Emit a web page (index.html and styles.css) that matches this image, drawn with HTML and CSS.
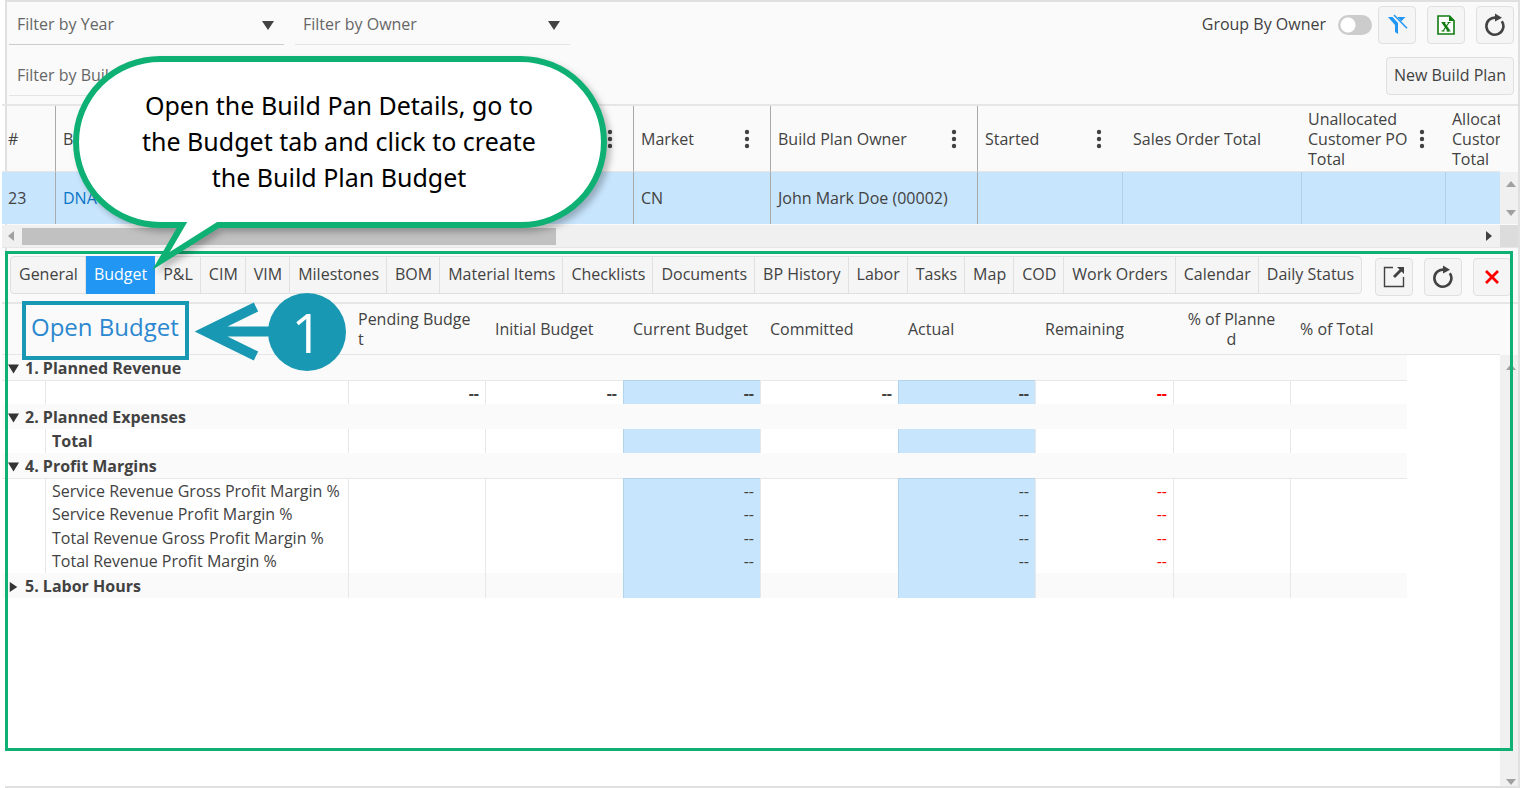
FILE: index.html
```html
<!DOCTYPE html>
<html lang="en">
<head>
  <meta charset="utf-8">
  <title>Build Plans</title>
  <link rel="stylesheet" href="styles.css">
</head>
<body>
  <svg class="sprite" aria-hidden="true">
    <symbol id="dots" viewBox="0 0 6 20">
      <circle cx="3" cy="3" r="2.2"/><circle cx="3" cy="10" r="2.2"/><circle cx="3" cy="17" r="2.2"/>
    </symbol>
    <symbol id="refresh" viewBox="0 0 24 24">
      <path d="M18.800 8.200A8.500 8.500 0 1 1 13.500 4.800" fill="none" stroke="currentColor" stroke-width="2.600"/>
      <path d="M12 .5l7 4.200-7 3.800z" fill="currentColor"/>
    </symbol>
  </svg>

  <main class="page">
    <header class="toolbar">
      <div class="filters">
        <div class="field field-active">
          <select aria-label="Filter by Year"><option>Filter by Year</option></select>
          <svg class="caret" viewBox="0 0 12 9"><path d="M0 0h12L6 9z"/></svg>
        </div>
        <div class="field">
          <select aria-label="Filter by Owner"><option>Filter by Owner</option></select>
          <svg class="caret" viewBox="0 0 12 9"><path d="M0 0h12L6 9z"/></svg>
        </div>
        <div class="field">
          <input type="text" aria-label="Filter by Build Plan" placeholder="Filter by Build Plan">
        </div>
      </div>
      <div class="actions">
        <div class="actions-row">
          <label class="switch-label" for="groupByOwner">Group By Owner</label>
          <input class="switch" type="checkbox" id="groupByOwner">
          <button class="btn btn-icon btn-filter" type="button" aria-label="Clear filters">
            <svg width="22" height="22" viewBox="0 0 22 22">
              <path d="M2 3h4.500l5.500 6v11l-3-2v-7z" fill="#2196f3"/>
              <path d="M11.500 3H19.500l-4.200 4.300z" fill="#2196f3"/>
              <path d="M8 1L21 14.200" stroke="#2196f3" stroke-width="1.500"/>
            </svg>
          </button>
          <button class="btn btn-icon" type="button" aria-label="Export to Excel">
            <svg width="18" height="20" viewBox="0 0 18 20">
              <path d="M1 1h11.500l4.500 4.500V19H1z" fill="#fff" stroke="#107c10" stroke-width="1.600"/>
              <path d="M12 1v5h5z" fill="#107c10"/>
              <path d="M6 7.500l6 8.500" stroke="#107c10" stroke-width="2.600"/>
              <path d="M12 7.500l-6 8.500" stroke="#107c10" stroke-width="1.200"/>
              <path d="M4.500 7.500h4M10.500 7.500h3M4.500 16h3M9.500 16h4" stroke="#107c10"/>
            </svg>
          </button>
          <button class="btn btn-icon" type="button" aria-label="Refresh">
            <svg width="24" height="24"><use href="#refresh"/></svg>
          </button>
        </div>
        <button class="btn btn-text" type="button">New Build Plan</button>
      </div>
    </header>

    <section class="plans">
      <table class="plans-table">
        <colgroup>
          <col class="c-num"><col class="c-name"><col class="c-market"><col class="c-owner">
          <col class="c-started"><col class="c-sales"><col class="c-unalloc"><col>
        </colgroup>
        <thead>
          <tr>
            <th>#</th>
            <th><div class="head">Build Plan<svg class="dots"><use href="#dots"/></svg></div></th>
            <th><div class="head">Market<svg class="dots"><use href="#dots"/></svg></div></th>
            <th><div class="head">Build Plan Owner<svg class="dots"><use href="#dots"/></svg></div></th>
            <th><div class="head">Started<svg class="dots"><use href="#dots"/></svg></div></th>
            <th class="plain wide">Sales Order Total</th>
            <th class="plain"><div class="head"><span>Unallocated<br>Customer PO<br>Total</span><svg class="dots"><use href="#dots"/></svg></div></th>
            <th class="plain">Allocated<br>Customer<br>Total</th>
          </tr>
        </thead>
        <tbody>
          <tr>
            <td>23</td>
            <td><a href="#">DNA-0023</a></td>
            <td>CN</td>
            <td>John Mark Doe (00002)</td>
            <td></td>
            <td class="soft"></td>
            <td class="soft"></td>
            <td class="soft"></td>
          </tr>
        </tbody>
      </table>
      <div class="vscroll plans-vscroll">
        <svg class="arrow" viewBox="0 0 10 6"><path d="M0 6h10L5 0z"/></svg>
        <svg class="arrow" viewBox="0 0 10 6"><path d="M0 0h10L5 6z"/></svg>
      </div>
      <div class="hscroll">
        <svg class="side-arrow" viewBox="0 0 6 10"><path d="M6 0v10L0 5z"/></svg>
        <div class="thumb"></div>
        <svg class="side-arrow side-arrow-on" viewBox="0 0 6 10"><path d="M0 0v10l6-5z"/></svg>
      </div>
      <div class="corner"></div>
    </section>

    <section class="details">
      <div class="details-bar">
        <nav class="tabs">
          <button type="button">General</button>
          <button type="button" class="active">Budget</button>
          <button type="button">P&amp;L</button>
          <button type="button">CIM</button>
          <button type="button">VIM</button>
          <button type="button">Milestones</button>
          <button type="button">BOM</button>
          <button type="button">Material Items</button>
          <button type="button">Checklists</button>
          <button type="button">Documents</button>
          <button type="button">BP History</button>
          <button type="button">Labor</button>
          <button type="button">Tasks</button>
          <button type="button">Map</button>
          <button type="button">COD</button>
          <button type="button">Work Orders</button>
          <button type="button">Calendar</button>
          <button type="button">Daily Status</button>
        </nav>
        <div class="details-actions">
          <button class="btn btn-icon" type="button" aria-label="Open in new window">
            <svg width="22" height="22" viewBox="0 0 22 22" fill="none" stroke="#424242">
              <path d="M10 1.500H1.500v19H20.500V11" stroke-width="1.400"/>
              <path d="M11 11L18 4" stroke-width="2.800"/>
              <path d="M14 1H21v7z" fill="#424242" stroke="none"/>
            </svg>
          </button>
          <button class="btn btn-icon" type="button" aria-label="Refresh details">
            <svg width="24" height="24"><use href="#refresh"/></svg>
          </button>
          <button class="btn btn-icon" type="button" aria-label="Close details">
            <svg width="14" height="14" viewBox="0 0 14 14"><path d="M1 1l12 12M13 1L1 13" stroke="#f00" stroke-width="2.800"/></svg>
          </button>
        </div>
      </div>

      <div class="budget">
        <table class="budget-table">
          <colgroup>
            <col class="b-indent"><col class="b-name"><col class="b-val"><col class="b-val2"><col class="b-val"><col class="b-val2">
            <col class="b-val"><col class="b-val2"><col class="b-pct"><col class="b-pct"><col>
          </colgroup>
          <thead>
            <tr>
              <th colspan="2"></th>
              <th>Pending Budge<br>t</th>
              <th>Initial Budget</th>
              <th>Current Budget</th>
              <th>Committed</th>
              <th>Actual</th>
              <th>Remaining</th>
              <th class="center">% of Planne<br>d</th>
              <th>% of Total</th>
              <th></th>
            </tr>
          </thead>
          <tbody>
            <tr class="group">
              <td colspan="10"><svg class="tri" viewBox="0 0 11 9"><path d="M0 0h11L5.500 9z"/></svg>1. Planned Revenue</td>
              <td class="rest"></td>
            </tr>
            <tr class="bold lined">
              <td></td><td></td><td>--</td><td>--</td><td class="hl">--</td><td>--</td><td class="hl">--</td><td class="neg">--</td><td></td><td></td><td class="rest"></td>
            </tr>
            <tr class="group">
              <td colspan="10"><svg class="tri" viewBox="0 0 11 9"><path d="M0 0h11L5.500 9z"/></svg>2. Planned Expenses</td>
              <td class="rest"></td>
            </tr>
            <tr class="bold">
              <td></td><td>Total</td><td></td><td></td><td class="hl"></td><td></td><td class="hl"></td><td></td><td></td><td></td><td class="rest"></td>
            </tr>
            <tr class="group">
              <td colspan="10"><svg class="tri" viewBox="0 0 11 9"><path d="M0 0h11L5.500 9z"/></svg>4. Profit Margins</td>
              <td class="rest"></td>
            </tr>
            <tr class="lined">
              <td></td><td>Service Revenue Gross Profit Margin %</td><td></td><td></td><td class="hl">--</td><td></td><td class="hl">--</td><td class="neg">--</td><td></td><td></td><td class="rest"></td>
            </tr>
            <tr>
              <td></td><td>Service Revenue Profit Margin %</td><td></td><td></td><td class="hl">--</td><td></td><td class="hl">--</td><td class="neg">--</td><td></td><td></td><td class="rest"></td>
            </tr>
            <tr>
              <td></td><td>Total Revenue Gross Profit Margin %</td><td></td><td></td><td class="hl">--</td><td></td><td class="hl">--</td><td class="neg">--</td><td></td><td></td><td class="rest"></td>
            </tr>
            <tr class="tight">
              <td></td><td>Total Revenue Profit Margin %</td><td></td><td></td><td class="hl">--</td><td></td><td class="hl">--</td><td class="neg">--</td><td></td><td></td><td class="rest"></td>
            </tr>
            <tr class="group">
              <td colspan="2"><svg class="tri" viewBox="0 0 11 12"><path d="M1 0v12l9-6z"/></svg>5. Labor Hours</td>
              <td></td><td></td><td class="hl"></td><td></td><td class="hl"></td><td></td><td></td><td></td><td class="rest"></td>
            </tr>
          </tbody>
        </table>
        <div class="vscroll budget-vscroll">
          <svg class="arrow" viewBox="0 0 10 6"><path d="M0 6h10L5 0z"/></svg>
          <svg class="arrow" viewBox="0 0 10 6"><path d="M0 0h10L5 6z"/></svg>
        </div>
      </div>

      <div class="outline"></div>
      <a class="open-budget" href="#">Open Budget</a>
      <div class="step">
        <svg class="step-arrow" width="80" height="62" viewBox="0 0 80 62">
          <path d="M62 6L12 30.500L62 55M12 30.500H80" fill="none" stroke="#1898b2" stroke-width="10" stroke-miterlimit="10"/>
        </svg>
        <span class="step-num">1</span>
      </div>
    </section>

    <div class="bubble">
      <svg class="bubble-shape" width="550" height="220" viewBox="0 0 550 220">
        <path d="M91 7H452A83 83 0 0 1 452 173H149L92 209L113 173H91A84 83 0 0 1 91 7Z" fill="#fff" stroke="#0eb073" stroke-width="6" stroke-miterlimit="10"/>
      </svg>
      <p>Open the Build Pan Details, go to<br>the Budget tab and click to create<br>the Build Plan Budget</p>
    </div>
  </main>
</body>
</html>
```
FILE: styles.css
```css
* {
  box-sizing: border-box;
}

body {
  margin: 0;
  background: #fff;
  color: #424242;
  font-family: "Open Sans", "Noto Sans", sans-serif;
  font-size: 16px;
  line-height: 20px;
}

button,
input,
select {
  font: inherit;
  color: inherit;
}

.sprite {
  display: none;
}

.page {
  position: relative;
  display: flex;
  flex-direction: column;
  min-height: 100vh;
  margin: 0 2px 0 5px;
  border: 2px solid #e0e0e0;
  background: #fafafa;
}

/* toolbar */
.toolbar {
  display: flex;
  justify-content: space-between;
  padding: 4px 4px 8px 2px;
}

.filters {
  display: grid;
  grid-template-columns: 275px 275px;
  gap: 12px 11px;
}

.field {
  display: flex;
  align-items: center;
  height: 39px;
  padding: 0 10px 0 8px;
  border-bottom: 1px solid #e4e4e4;
}

.field-active {
  border-bottom-color: #ccc;
}

.field select,
.field input {
  flex: 1;
  min-width: 0;
  padding: 0 0 2px;
  border: 0;
  outline: 0;
  background: none;
  color: #666;
  appearance: none;
}

.field input::placeholder {
  color: #666;
  opacity: 1;
}

.caret {
  width: 12px;
  height: 9px;
  fill: #424242;
}

.actions {
  display: flex;
  flex-direction: column;
  align-items: flex-end;
  gap: 13px;
}

.actions-row {
  display: flex;
  align-items: center;
  gap: 11px;
}

.switch-label {
  padding-bottom: 2px;
}

.switch {
  width: 34px;
  height: 20px;
  margin: 0 0 0 1px;
  border-radius: 10px;
  background: radial-gradient(circle at 10px 10px, #fff 7px, #ccc 8px);
  appearance: none;
}

.btn {
  display: flex;
  align-items: center;
  justify-content: center;
  height: 38px;
  padding: 0;
  border: 1px solid #e0e0e0;
  border-radius: 4px;
  background: #f5f5f5;
}

.btn-icon {
  width: 38px;
}

.btn-filter {
  margin-left: -5px;
}

.btn-text {
  padding: 0 7px 2px;
}

/* build plan list */
.plans {
  display: grid;
  grid-template-columns: minmax(0, 1fr) 18px;
  margin-left: -5px;
  border-top: 2px solid #e6e6e6;
  border-bottom: 1px solid #e6e6e6;
}

table {
  width: 100%;
  table-layout: fixed;
  border-collapse: separate;
  border-spacing: 0;
}

th {
  font-weight: normal;
  text-align: left;
}

.c-num { width: 53px; }
.c-name { width: 578px; }
.c-market { width: 137px; }
.c-owner { width: 207px; }
.c-started { width: 145px; }
.c-sales { width: 179px; }
.c-unalloc { width: 144px; }

.plans-table th,
.plans-table td {
  padding: 0 7px;
  border-left: 1px solid #aaa;
  white-space: nowrap;
  overflow: hidden;
}

.plans-table th {
  height: 66px;
  border-bottom: 1px solid #e6e6e6;
}

.plans-table td {
  height: 52px;
  background: #c7e5fd;
}

.plans-table th:first-child,
.plans-table td:first-child {
  padding-left: 6px;
  border-left: 0;
}

.plans-table th.plain {
  padding-left: 6px;
  border-left-color: transparent;
}

.plans-table th.wide {
  padding-left: 10px;
}

.plans-table td.soft {
  border-left-color: #b0d0ea;
}

.plans-table a {
  color: #0a74c8;
  text-decoration: none;
}

.head {
  display: flex;
  align-items: center;
  justify-content: space-between;
  padding-right: 13px;
}

.dots {
  width: 6px;
  height: 20px;
  fill: #424242;
}

.vscroll {
  display: flex;
  flex-direction: column;
  align-items: center;
  justify-content: space-between;
  background: #f0f0f0;
}

.plans-vscroll {
  margin-top: 66px;
  padding: 9px 0 8px 3px;
}

.arrow {
  width: 10px;
  height: 6px;
  fill: #a0a0a0;
}

.hscroll {
  display: flex;
  align-items: center;
  height: 22px;
  margin-top: 1px;
  padding: 0 8px 0 6px;
  background: #f0f0f0;
}

.side-arrow {
  width: 6px;
  height: 10px;
  fill: #a0a0a0;
}

.side-arrow-on {
  margin-left: auto;
  fill: #424242;
}

.thumb {
  width: 36%;
  height: 17px;
  margin-left: 8px;
  background: #c1c1c1;
}

.corner {
  margin-top: 1px;
  background: #dcdcdc;
}

/* details panel */
.details {
  position: relative;
  display: flex;
  flex: 1;
  flex-direction: column;
}

.details-bar {
  display: flex;
  align-items: flex-start;
  justify-content: space-between;
  padding: 8px 7px 6px 3px;
}

.tabs {
  display: flex;
  height: 38px;
  border: 1px solid #e0e0e0;
  border-radius: 4px;
  background: #f5f5f5;
}

.tabs button {
  padding: 0 7px 2px 8px;
  border: 0;
  border-right: 1px solid #e0e0e0;
  background: none;
  white-space: nowrap;
}

.tabs button:last-child {
  border-right: 0;
}

.tabs .active {
  margin: -1px 0;
  border-color: #2196f3;
  background: #2196f3;
  color: #fff;
}

.details-actions {
  display: flex;
  gap: 11px;
  padding-top: 2px;
}

.budget {
  position: relative;
  display: flex;
  flex: 1;
  margin-left: -5px;
  border-top: 2px solid #e6e6e6;
  background: linear-gradient(#fafafa 51px, #fff 51px);
}

.budget-table {
  align-self: flex-start;
}

.b-indent { width: 43px; }
.b-name { width: 303px; }
.b-val { width: 137px; }
.b-val2 { width: 138px; }
.b-pct { width: 117px; }

.budget-table th {
  height: 51px;
  padding: 0 10px;
  border-bottom: 1px solid #e6e6e6;
  white-space: nowrap;
}

.budget-table .center {
  text-align: center;
}

.budget-table td {
  height: 24px;
  padding: 0 6px;
  border-left: 1px solid #e8e8e8;
  background: #fff;
  text-align: right;
  white-space: nowrap;
}

.budget-table td:first-child {
  border-left: 0;
}

.budget-table td:nth-child(2) {
  text-align: left;
}

.budget-table .group td {
  height: 25px;
  background: #fafafa;
}

.budget-table .group td:first-child {
  text-align: left;
  font-weight: bold;
}

.budget-table .lined td {
  border-top: 1px solid #e8e8e8;
}

.budget-table .tight td {
  height: 23px;
  line-height: 19px;
}

.budget-table .bold {
  font-weight: bold;
}

.budget-table td.hl,
.budget-table .group td.hl {
  border-color: #b4d4ec;
  background: #c7e5fd;
}

.budget-table .neg {
  color: #f00;
}

.budget-table td.rest,
.budget-table .group td.rest {
  border-color: transparent;
  background: #fff;
}

.tri {
  width: 11px;
  height: 10px;
  margin-right: 6px;
  fill: #333;
}

.budget-vscroll {
  flex: none;
  width: 18px;
  margin-top: 51px;
  padding: 9px 0 1px 3px;
}

/* callouts */
.outline {
  position: absolute;
  inset: 3px 5px 35px -2px;
  border: 3px solid #0eb073;
  pointer-events: none;
}

.open-budget {
  position: absolute;
  top: 53px;
  left: 15px;
  padding: 8px 6px 15px 5px;
  border: 4px solid #1898b2;
  background: #fafafa;
  color: #2b88d0;
  font-size: 24px;
  line-height: 28px;
  text-decoration: none;
}

.step {
  position: absolute;
  top: 45px;
  left: 187px;
  display: flex;
  align-items: center;
}

.step-num {
  width: 78px;
  height: 78px;
  margin-left: -6px;
  border-radius: 50%;
  background: #1898b2;
  color: #fff;
  font-size: 54px;
  line-height: 78px;
  text-align: center;
}

.bubble {
  position: absolute;
  top: 50px;
  left: 62px;
  width: 550px;
  color: #000;
  font-family: "Noto Sans", sans-serif;
  font-size: 25px;
  line-height: 36px;
  text-align: center;
}

.bubble-shape {
  position: absolute;
  top: 0;
  left: 0;
  filter: drop-shadow(4px 4px 3px rgba(0, 0, 0, 0.25));
}

.bubble p {
  position: relative;
  margin: 0;
  padding: 35px 10px 0 0;
}
```
